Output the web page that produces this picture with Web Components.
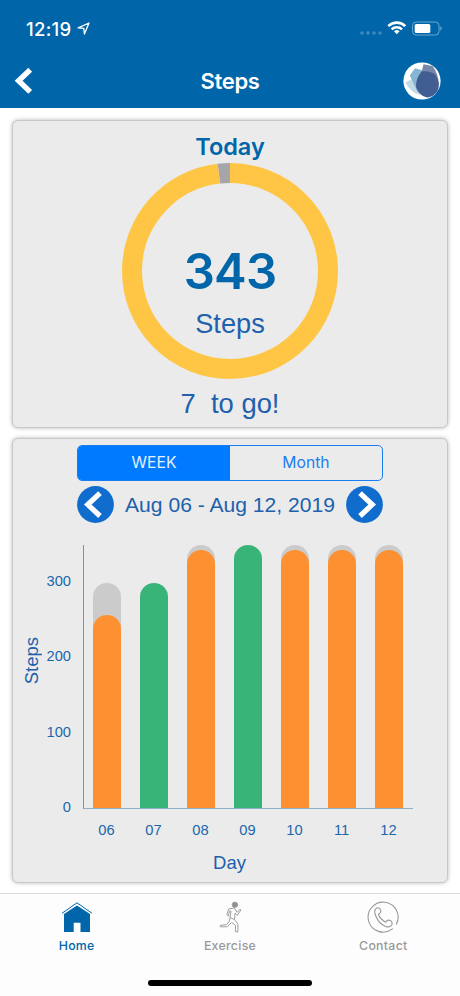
<!DOCTYPE html>
<html lang="en">
<head>
<meta charset="UTF-8">
<meta name="viewport" content="width=device-width, initial-scale=1">
<title>Steps</title>
<style>
  html, body { margin: 0; height: 100%; }
  body {
    --brand: #0066a9;
    --link: #2060ad;
    --helv: "Liberation Sans", Arial, sans-serif;
    background: #fff;
    font-family: Inter, sans-serif;
    overflow: hidden;
  }
</style>
</head>
<body>
<steps-app></steps-app>

<script>
class StatusBar extends HTMLElement {
  constructor() {
    super();
    this.attachShadow({ mode: "open" });
    this.shadowRoot.innerHTML = `
      <style>
        :host {
          display: flex;
          align-items: center;
          justify-content: space-between;
          height: 56px;
          box-sizing: border-box;
          padding: 0 18px 0 26px;
          color: #fff;
        }
        .time { display: flex; align-items: center; gap: 5px; padding-top: 1px; font-size: 18.5px; line-height: 22px; font-weight: 500; letter-spacing: .3px; }
        svg { display: block; }
      </style>
      <div class="time"><span><slot></slot></span>
        <svg width="13" height="13" viewBox="0 0 13 13"><path d="M12 1 L1.2 5.9 L6.8 6.4 L7.4 12 Z" fill="none" stroke="#fff" stroke-width="1.3" stroke-linejoin="round"/></svg>
      </div>
      <svg width="82" height="16" viewBox="0 0 82 16">
        <g fill="#4088bd"><circle cx="2" cy="13" r="1.8"/><circle cx="8" cy="13" r="1.8"/><circle cx="14" cy="13" r="1.8"/><circle cx="20" cy="13" r="1.8"/></g>
        <g fill="none" stroke="#fff" stroke-width="2.6">
          <path d="M28.3 6.1 A12.2 12.2 0 0 1 45.3 6.1"/>
          <path d="M31.6 9.4 A7.5 7.5 0 0 1 42 9.4"/>
        </g>
        <path d="M34 11.2 A4.2 4.2 0 0 1 39.6 11.2 L36.8 14.3 Z" fill="#fff"/>
        <rect x="52.5" y="2" width="26.5" height="13" rx="3.6" fill="none" stroke="#6aa7d0"/>
        <path d="M80.3 6.3 q1.5 .6 1.5 2.2 q0 1.6 -1.5 2.2z" fill="#6aa7d0"/>
        <rect x="54.7" y="4" width="15.6" height="9" rx="1.6" fill="#fff"/>
      </svg>
    `;
  }
}
customElements.define("status-bar", StatusBar);

class TitleBar extends HTMLElement {
  constructor() {
    super();
    this.attachShadow({ mode: "open" });
    this.shadowRoot.innerHTML = `
      <style>
        :host {
          display: grid;
          grid-template-columns: 60px 1fr 60px;
          align-items: center;
          height: 50px;
          color: #fff;
        }
        h1 { margin: 0; font-size: 22px; line-height: 50px; font-weight: 600; text-align: center; letter-spacing: -0.3px; }
        svg { display: block; }
        .back { margin-left: 14px; }
        .logo { margin-left: 3px; }
      </style>
      <svg class="back" width="20" height="28" viewBox="0 0 20 28"><path d="M16.2 2.7 L4.6 13.8 L16.2 24.9" fill="none" stroke="#fff" stroke-width="5.4"/></svg>
      <h1><slot></slot></h1>
      <svg class="logo" width="38" height="38" viewBox="0 0 38 38">
        <circle cx="19" cy="19" r="18.6" fill="#fff"/>
        <path d="M2.5 20.5 L9 17 L14 22 L17 33 Q8 31 2.5 20.5 Z" fill="#c3d9e6"/>
        <path d="M6.8 13.5 L12 6.2 L20 8.5 L19 20 L14.5 30 Z" fill="#86b5d3"/>
        <path d="M20.5 2.2 L29.5 4 Q35 11 36 22 L16.5 18 Z" fill="#7888aa"/>
        <path d="M18.5 9.5 Q27 8.5 32.5 13 Q38 22 34.5 29 Q30 35.5 24 35.5 Q16 34 13 25 Q12.5 17 18.5 9.5 Z" fill="#415d91"/>
      </svg>
    `;
  }
}
customElements.define("title-bar", TitleBar);

class PanelCard extends HTMLElement {
  constructor() {
    super();
    this.attachShadow({ mode: "open" });
    this.shadowRoot.innerHTML = `
      <style>
        :host {
          display: flex;
          flex-direction: column;
          align-items: center;
          box-sizing: border-box;
          background: #ebebeb;
          border: 1px solid #c8c8c8;
          border-radius: 6px;
          box-shadow: 0 0 4px rgba(0, 0, 0, .28);
        }
      </style>
      <slot></slot>
    `;
  }
}
customElements.define("panel-card", PanelCard);

class GoalRing extends HTMLElement {
  constructor() {
    super();
    this.attachShadow({ mode: "open" });
  }

  connectedCallback() {
    const value = Number(this.getAttribute("value"));
    const goal = Number(this.getAttribute("goal"));
    const len = 2 * Math.PI * 98;
    const done = len * value / goal;

    this.shadowRoot.innerHTML = `
      <style>
        :host { display: flex; flex-direction: column; align-items: center; }
        h2 { margin: 0; padding: 11px 0 1px; font-size: 23.5px; line-height: 30px; font-weight: 600; color: var(--brand); }
        .ring { display: grid; width: 216px; height: 216px; }
        .ring > * { grid-area: 1 / 1; }
        .label { text-align: center; }
        .value { padding-top: 79px; font-size: 49px; line-height: 60px; font-weight: 600; letter-spacing: -.8px; color: var(--brand); }
        .unit { font: 27.2px/32px var(--helv); color: var(--link); margin-top: 6px; }
        .left { font: 27.4px/32px var(--helv); color: var(--link); white-space: pre; margin-top: 9px; }
      </style>
      <h2><slot></slot></h2>
      <div class="ring">
        <svg width="216" height="216" viewBox="0 0 216 216">
          <g fill="none" stroke-width="20" transform="rotate(-90 108 108)">
            <circle cx="108" cy="108" r="98" stroke="#a6a6aa" stroke-dasharray="${len - done} ${len}" stroke-dashoffset="${-done}"/>
            <circle cx="108" cy="108" r="98" stroke="#ffc646" stroke-dasharray="${done} ${len}"/>
          </g>
        </svg>
        <div class="label">
          <div class="value">${value}</div>
          <div class="unit">Steps</div>
        </div>
      </div>
      <div class="left">${goal - value}  to go!</div>
    `;
  }
}
customElements.define("goal-ring", GoalRing);

class SegmentControl extends HTMLElement {
  constructor() {
    super();
    this.attachShadow({ mode: "open" });
    this.shadowRoot.innerHTML = `
      <style>
        :host {
          display: grid;
          grid-template-columns: 1fr 1fr;
          box-sizing: border-box;
          width: 306px;
          height: 36px;
          border: 1px solid #1a7df0;
          border-radius: 5px;
          overflow: hidden;
        }
        button {
          border: 0;
          padding: 0;
          background: none;
          color: #1a7df0;
          font: 400 15.7px/34px Inter, sans-serif;
        }
        button.on { background: #007aff; color: #e4f1ff; }
      </style>
      <button class="on">WEEK</button>
      <button>Month</button>
    `;
    const buttons = this.shadowRoot.querySelectorAll("button");
    buttons.forEach(btn => {
      btn.addEventListener("click", () => {
        buttons.forEach(b => b.classList.toggle("on", b === btn));
      });
    });
  }
}
customElements.define("segment-control", SegmentControl);

class DateRange extends HTMLElement {
  constructor() {
    super();
    this.attachShadow({ mode: "open" });
    this.shadowRoot.innerHTML = `
      <style>
        :host {
          display: flex;
          align-items: center;
          justify-content: space-between;
          width: 306px;
          font: 21.1px/36px var(--helv);
          color: var(--link);
        }
        svg { display: block; }
        span { padding-top: 2px; }
      </style>
      <svg width="37" height="37" viewBox="0 0 37 37"><circle cx="18.5" cy="18.5" r="18.4" fill="#116dcd"/><path d="M23 7.2 L10.8 18.6 L23 30" fill="none" stroke="#fff" stroke-width="5.2"/></svg>
      <span><slot></slot></span>
      <svg width="37" height="37" viewBox="0 0 37 37"><circle cx="18.5" cy="18.5" r="18.4" fill="#116dcd"/><path d="M14 7.2 L26.2 18.6 L14 30" fill="none" stroke="#fff" stroke-width="5.2"/></svg>
    `;
  }
}
customElements.define("date-range", DateRange);

class StepsChart extends HTMLElement {
  constructor() {
    super();
    this.attachShadow({ mode: "open" });
  }

  connectedCallback() {
    // day:steps:goal
    const days = this.getAttribute("days").split(" ").map(d => d.split(":"));
    const px = v => (v * 0.7525).toFixed(1);

    this.shadowRoot.innerHTML = `
      <style>
        :host {
          display: grid;
          grid-template-columns: 20px 40px 330px;
          grid-template-rows: 264px auto auto;
          align-self: flex-start;
          margin-left: 10px;
          font-family: var(--helv);
          color: #1b67ac;
        }
        .ytitle {
          writing-mode: vertical-rl;
          transform: rotate(180deg);
          font-size: 18.5px;
          line-height: 20px;
          text-align: center;
          color: var(--link);
          align-self: center;
          margin: -33px 0 0 -1px;
        }
        .yticks {
          display: flex;
          flex-direction: column;
          justify-content: space-between;
          padding: 27px 12px 0 0;
          margin-bottom: -7px;
          text-align: right;
          font-size: 14.7px;
          line-height: 18px;
        }
        .plot {
          display: grid;
          grid-template-columns: repeat(7, 47px);
          justify-items: center;
          align-items: end;
          border-left: 1px solid #5e9bc6;
          border-bottom: 1px solid #8fb0c6;
        }
        .bar {
          display: flex;
          align-items: flex-end;
          width: 28px;
          margin-right: 1px;
          border-radius: 14px 14px 0 0;
          background: #cbcbcb;
        }
        .bar.met { background: none; }
        .fill { width: 28px; border-radius: 14px 14px 0 0; background: #fd9131; }
        .met .fill { background: #38b479; }
        .xticks {
          grid-column: 3;
          display: grid;
          grid-template-columns: repeat(7, 47px);
          padding-top: 11px;
          text-align: center;
          font-size: 14.7px;
          line-height: 20px;
        }
        .xtitle {
          grid-column: 1 / 4;
          padding: 11px 0 0 23px;
          text-align: center;
          font-size: 18.5px;
          line-height: 24px;
          color: var(--link);
        }
      </style>
      <div class="ytitle">Steps</div>
      <div class="yticks"><span>300</span><span>200</span><span>100</span><span>0</span></div>
      <div class="plot">
        ${days.map(([, steps, goal]) => `
          <div class="bar ${+steps >= +goal ? "met" : ""}" style="height:${px(goal)}px">
            <div class="fill" style="height:${px(steps)}px"></div>
          </div>`).join("")}
      </div>
      <div class="xticks">${days.map(([day]) => `<span>${day}</span>`).join("")}</div>
      <div class="xtitle">Day</div>
    `;
  }
}
customElements.define("steps-chart", StepsChart);

class TabItem extends HTMLElement {
  constructor() {
    super();
    this.attachShadow({ mode: "open" });
    this.shadowRoot.innerHTML = `
      <style>
        :host {
          display: flex;
          flex-direction: column;
          align-items: center;
          gap: 5px;
          padding-top: 7px;
          color: #999;
          font-size: 12.3px;
          line-height: 16px;
          font-weight: 500;
          letter-spacing: .3px;
        }
        :host([active]) { color: var(--brand); }
      </style>
      <slot name="icon"></slot>
      <span><slot></slot></span>
    `;
  }
}
customElements.define("tab-item", TabItem);

class TabBar extends HTMLElement {
  constructor() {
    super();
    this.attachShadow({ mode: "open" });
    this.shadowRoot.innerHTML = `
      <style>
        :host {
          display: flex;
          flex-direction: column;
          justify-content: space-between;
          align-items: center;
          box-sizing: border-box;
          height: 103px;
          padding-bottom: 10px;
          border-top: 1px solid #dcdcdc;
          background: #fdfdfd;
        }
        .tabs { display: grid; grid-template-columns: repeat(3, 1fr); width: 100%; }
        .handle { width: 164px; height: 6px; border-radius: 3px; background: #000; }
        svg { display: block; }
      </style>
      <div class="tabs">
        <tab-item active>
          <svg slot="icon" width="32" height="32" viewBox="0 0 32 32">
            <path d="M1 12.3 L16 1.8 L31 12.3" fill="none" stroke="#0066a9" stroke-width="1"/>
            <path d="M3 12.9 L16 4.4 L29 12.9 V31 H19.5 V21.7 H12.7 V31 H3 Z" fill="#0066a9"/>
          </svg>Home
        </tab-item>
        <tab-item>
          <svg slot="icon" width="32" height="32" viewBox="0 0 32 32" fill="none" stroke="#a0a0a0" stroke-width="1" stroke-linejoin="round" stroke-linecap="round">
            <circle cx="20.9" cy="3.8" r="2.7" fill="#8e8e8e"/>
            <path d="M19 7.2 L14.7 8 L12.9 13.7 L14.2 15.2 L15.6 10.2 L17 10 L16.1 16.5 L15.3 20.2 L12.5 23.6 L6.3 24.3 L6.2 25.8 L13.4 25.7 L17.7 21.4 L21.6 24.4 L21.3 30.6 L23.8 31 L24 23.3 L20.5 18.5 L21.1 12.2 L23.4 14.2 L26.9 9 L26 8.2 L23.1 11.4 L21.1 8.2 Z"/>
            <path d="M16.2 16.7 L20.5 18.5"/>
          </svg>Exercise
        </tab-item>
        <tab-item>
          <svg slot="icon" width="32" height="32" viewBox="0 0 32 32" fill="none" stroke="#999" stroke-width="1.1" stroke-linecap="round" stroke-linejoin="round">
            <path d="M29.4 23.1 A15 15 0 1 0 25.4 27.9"/>
            <path d="M11.4 13.2 C13 12.5 14.2 11.5 13.7 9.5 C13.3 7.4 11.6 6.2 9.8 7.1 C7.4 8.4 7.3 11.2 8.5 14.2 C10.2 19 14 23.5 18.6 25.4 C21 26.3 23 25.9 24.3 24.6 C26 22.8 25 20.2 23.2 19.5 C21.2 18.7 19.6 19.4 19 21.2 C16.4 20.2 12 16.3 11.4 13.2 Z"/>
          </svg>Contact
        </tab-item>
      </div>
      <div class="handle"></div>
    `;
  }
}
customElements.define("tab-bar", TabBar);

class StepsApp extends HTMLElement {
  constructor() {
    super();
    this.attachShadow({ mode: "open" });
    this.shadowRoot.innerHTML = `
      <style>
        :host { display: flex; flex-direction: column; height: 996px; }
        header { background: var(--brand); height: 108px; }
        main { flex: 1; display: flex; flex-direction: column; gap: 10px; padding: 12px 12px 0; }
        .today { height: 308px; }
        .history { height: 445px; padding-top: 6px; }
        date-range { margin-top: 4px; }
        steps-chart { margin-top: 22px; }
      </style>
      <header>
        <status-bar>12:19</status-bar>
        <title-bar>Steps</title-bar>
      </header>
      <main>
        <panel-card class="today">
          <goal-ring value="343" goal="350">Today</goal-ring>
        </panel-card>
        <panel-card class="history">
          <segment-control></segment-control>
          <date-range>Aug 06 - Aug 12, 2019</date-range>
          <steps-chart days="06:257:300 07:300:300 08:343:350 09:350:350 10:343:350 11:343:350 12:343:350"></steps-chart>
        </panel-card>
      </main>
      <tab-bar></tab-bar>
    `;
  }
}
customElements.define("steps-app", StepsApp);
</script>
</body>
</html>
